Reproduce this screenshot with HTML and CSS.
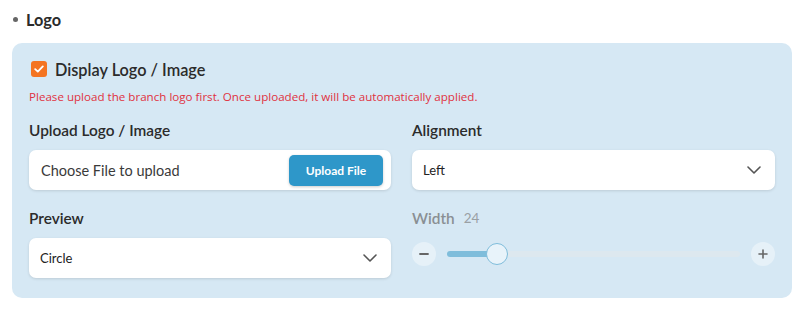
FILE: index.html
```html
<!DOCTYPE html>
<html lang="en">
<head>
  <meta charset="UTF-8">
  <title>Logo Settings</title>
  <link rel="stylesheet" href="styles.css">
</head>
<body>
  <div class="section-title"><span class="dot"></span>Logo</div>
  <div class="panel">
    <label class="check">
      <span class="box">
        <svg width="10" height="8" viewBox="0 0 10 8"><path d="M1.2 4.2 L3.8 6.6 L8.8 1.4" fill="none" stroke="#fff" stroke-width="1.8" stroke-linecap="round" stroke-linejoin="round"/></svg>
      </span>
      Display Logo / Image
    </label>
    <p class="warn">Please upload the branch logo first. Once uploaded, it will be automatically applied.</p>

    <div class="grid">
      <div class="field">
        <div class="label">Upload Logo / Image</div>
        <div class="input">
          <span>Choose File to upload</span>
          <button class="btn">Upload File</button>
        </div>
      </div>
      <div class="field">
        <div class="label">Alignment</div>
        <div class="input select">
          <span>Left</span>
          <svg class="chev" width="14" height="8" viewBox="0 0 14 8"><path d="M1 1 L7 7 L13 1" fill="none" stroke="#555" stroke-width="1.6" stroke-linecap="round" stroke-linejoin="round"/></svg>
        </div>
      </div>
      <div class="field">
        <div class="label">Preview</div>
        <div class="input select">
          <span>Circle</span>
          <svg class="chev" width="14" height="8" viewBox="0 0 14 8"><path d="M1 1 L7 7 L13 1" fill="none" stroke="#555" stroke-width="1.6" stroke-linecap="round" stroke-linejoin="round"/></svg>
        </div>
      </div>
      <div class="field">
        <div class="label muted">Width <small>24</small></div>
        <div class="slider">
          <span class="round">
            <svg width="10" height="10" viewBox="0 0 10 10"><path d="M1 5 H9" stroke="#666" stroke-width="1.8" stroke-linecap="round"/></svg>
          </span>
          <div class="track">
            <div class="fill" style="width: 17%"></div>
            <div class="thumb" style="left: 17%"></div>
          </div>
          <span class="round">
            <svg width="10" height="10" viewBox="0 0 10 10"><path d="M1 5 H9 M5 1 V9" stroke="#666" stroke-width="1.6" stroke-linecap="round"/></svg>
          </span>
        </div>
      </div>
    </div>
  </div>
</body>
</html>
```

FILE: styles.css
```css
body {
  margin: 0;
  padding: 8px 10px 0 12px;
  background: #fff;
  font-family: 'Lato', sans-serif;
  color: #2b2b2b;
}
.section-title {
  display: flex;
  align-items: center;
  font-size: 16.3px;
  font-weight: 700;
  height: 22px;
  margin-bottom: 13px;
}
.dot {
  width: 5px;
  height: 5px;
  border-radius: 50%;
  background: #666;
  margin: 0 8px 0 1px;
}
.panel {
  background: #d6e8f4;
  border-radius: 10px;
  padding: 18px 17px 20px 17px;
  width: 746px;
}
.check {
  display: flex;
  align-items: center;
  gap: 8px;
  font-size: 16.3px;
  font-weight: 600;
  margin-left: 2px;
  height: 16px;
}
.box {
  width: 16px;
  height: 16px;
  border-radius: 3px;
  background: #f47421;
  display: flex;
  align-items: center;
  justify-content: center;
}
.warn {
  margin: 13px 0 0 0;
  font-family: 'Open Sans', sans-serif;
  font-size: 11.6px;
  color: #e0323f;
  height: 14px;
  line-height: 14px;
}
.grid {
  display: grid;
  grid-template-columns: 362px 363px;
  column-gap: 21px;
  row-gap: 18px;
  margin-top: 16px;
}
.label {
  font-size: 15.4px;
  font-weight: 600;
  height: 20px;
  margin-bottom: 10px;
  display: flex;
  align-items: center;
}
.label.muted {
  color: #8a8f93;
  font-weight: 600;
}
.label small {
  font-size: 13.5px;
  font-weight: 400;
  color: #9aa0a4;
  margin-left: 9px;
}
.input {
  height: 40px;
  background: #fff;
  border-radius: 7px;
  box-shadow: 0 1px 3px rgba(0, 0, 0, 0.12);
  display: flex;
  align-items: center;
  justify-content: space-between;
  padding: 0 8px 0 12px;
  font-size: 14.5px;
  color: #3a3a3a;
}
.select {
  font-size: 13px;
  color: #222;
  padding: 0 14px 0 11px;
}
.btn {
  background: #2e97c9;
  color: #fff;
  border: none;
  border-radius: 5px;
  height: 31px;
  width: 94px;
  font-family: inherit;
  font-size: 12px;
  font-weight: 700;
  box-shadow: 0 1px 3px rgba(0, 0, 0, 0.2);
}
.slider {
  display: flex;
  align-items: center;
  height: 32px;
  margin-top: 4px;
}
.round {
  width: 24px;
  height: 24px;
  border-radius: 50%;
  background: #e6f1f8;
  display: flex;
  align-items: center;
  justify-content: center;
  flex: none;
}
.track {
  position: relative;
  flex: 1;
  height: 6px;
  border-radius: 3px;
  background: #dde8ef;
  margin: 0 11px 0 11px;
}
.fill {
  height: 100%;
  border-radius: 3px;
  background: #7fbddb;
}
.thumb {
  position: absolute;
  top: 50%;
  width: 20px;
  height: 20px;
  border-radius: 50%;
  background: #e8f3fa;
  border: 1px solid #7fbddb;
  transform: translate(-50%, -50%);
}
```
